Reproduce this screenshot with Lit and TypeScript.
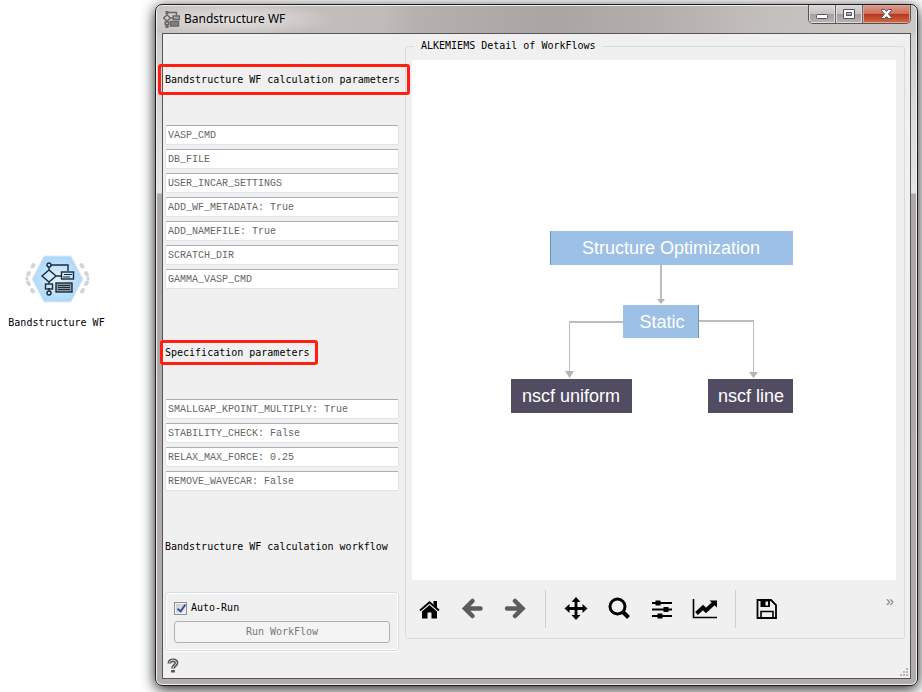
import { LitElement, html, svg, css } from "lit";
import { customElement, property, state } from "lit/decorators.js";

const flowGlyph = svg`
  <circle cx="8" cy="3" r="2"/>
  <path d="M10 3H27V9M8 5V8M1 14L8 8L15 14L8 20ZM15 14H20M8 20V22M8 26V29"/>
  <rect x="20.500" y="10" width="12" height="7"/>
  <path d="M23 12.500H31M22 15H29" stroke-width="1"/>
  <rect x="4.500" y="22" width="7" height="5"/>
  <circle cx="8" cy="31" r="2"/>
  <rect x="15" y="21" width="16" height="9" fill="#8d9aa5"/>
  <path d="M17 23.500H29M17 25.500H29M17 27.500H29" stroke-width="1"/>`;

@customElement("desktop-node")
export class DesktopNode extends LitElement {
  @property() label = "";

  static styles = css`
    :host {
      display: flex;
      flex-direction: column;
      align-items: center;
      gap: 9px;
      font: 10px/16px "DejaVu Sans Mono", "Liberation Mono", monospace;
      color: #000;
    }
    .hexagon {
      display: block;
      width: 68px;
      height: 54px;
    }
    .label {
      white-space: nowrap;
    }
  `;

  render() {
    return html`
      <svg class="hexagon" viewBox="0 0 68 54" aria-hidden="true">
        <defs>
          <radialGradient id="fill">
            <stop offset="0" stop-color="#e0f1ff" />
            <stop offset="1" stop-color="#acd8fb" />
          </radialGradient>
        </defs>
        <g stroke="#cfd6da" stroke-width="4" stroke-linecap="round">
          <path d="M9.500 14.500L10.500 13M5 22.500L6 21M5 30.500L6 32M9 38L10 39.500" />
          <path d="M59.500 14.500L58.500 13M64 22.500L63 21M64 30.500L63 32M60 38L59 39.500" />
          <path d="M4 26V27M65 26V27" stroke-width="3" />
        </g>
        <path d="M9 27L21 4H48L60 27L48 50H21Z" fill="url(#fill)" stroke="#e3eaee" stroke-width="1" />
        <g transform="translate(18 10)" fill="none" stroke="#1d2b36" stroke-width="1.400">${flowGlyph}</g>
      </svg>
      <span class="label">${this.label}</span>
    `;
  }
}

@customElement("workflow-diagram")
export class WorkflowDiagram extends LitElement {
  static styles = css`
    :host {
      display: block;
    }
    .diagram {
      display: block;
      width: 282px;
      height: 182px;
    }
    .step {
      fill: #9dc0e6;
    }
    .leaf {
      fill: #524c63;
    }
    .edge {
      fill: none;
      stroke: #bcbcbc;
      stroke-width: 2;
    }
    .thin {
      stroke-width: 1;
    }
    .tip {
      fill: #b4b4b4;
    }
    .shade {
      fill: #6f93b3;
    }
    .name {
      font: 18px "Liberation Sans", Arial, sans-serif;
      fill: #fff;
      text-anchor: middle;
    }
  `;

  render() {
    return html`
      <svg class="diagram" viewBox="0 0 282 182" role="img" aria-label="Workflow steps">
        <path class="edge" d="M150 34V70M112 91H58M188 90H243" />
        <path class="edge thin" d="M58.500 91V142M242.500 90V142" />
        <path class="tip" d="M146 68H154L150 73ZM54 140H63L58.500 147ZM238 141H247L242.500 147Z" />
        <rect class="step" x="39" y="0" width="243" height="34" />
        <rect class="shade" x="39" y="0" width="1" height="34" />
        <rect class="step" x="112" y="74" width="76" height="33" />
        <rect class="shade" x="187" y="74" width="1" height="33" />
        <rect class="leaf" x="0" y="148" width="121" height="34" />
        <rect class="leaf" x="197" y="148" width="85" height="34" />
        <text class="name" x="160" y="23">Structure Optimization</text>
        <text class="name" x="151" y="97">Static</text>
        <text class="name" x="60" y="171">nscf uniform</text>
        <text class="name" x="240" y="171">nscf line</text>
      </svg>
    `;
  }
}

interface Tool {
  name: string;
  muted?: boolean;
  icon: unknown;
}

const toolGroups: Tool[][] = [
  [
    {
      name: "Home",
      icon: svg`<path d="M12.500 8L20 14.500V21.500H14.500V15.500H10.500V21.500H5V14.500Z"/>
        <path d="M16.500 4H20V11L16.500 8Z"/>
        <path d="M3 13.500L12.500 5.200L22 13.500" fill="none" stroke="#000" stroke-width="1.900"/>`,
    },
    {
      name: "Back",
      muted: true,
      icon: svg`<path d="M12.500 4L5 11.500L12.500 19M6 11.500H20.500" fill="none" stroke="#5c5c5c" stroke-width="4.500"/>`,
    },
    {
      name: "Forward",
      muted: true,
      icon: svg`<path d="M12 4L19.500 11.500L12 19M18.500 11.500H4" fill="none" stroke="#5c5c5c" stroke-width="4.500"/>`,
    },
  ],
  [
    {
      name: "Pan",
      icon: svg`<path d="M12 2V21M3 11.500H21" stroke="#000" stroke-width="2.800"/>
        <path d="M12 0L16.500 5H7.500ZM12 23L16.500 18H7.500ZM0.500 11.500L5.500 7V16ZM23.500 11.500L18.500 7V16Z"/>`,
    },
    {
      name: "Zoom",
      icon: svg`<g fill="none" stroke="#000" stroke-width="3"><circle cx="10.500" cy="9.500" r="7.500"/>
        <path d="M16 15L21.500 20.500" stroke-width="4"/></g>`,
    },
    {
      name: "Configure subplots",
      icon: svg`<path d="M2 6H22M2 12.500H22M2 19H22" stroke="#000" stroke-width="2"/>
        <path d="M5.500 3.500H10.500V8.500H5.500ZM13.500 10H18.500V15H13.500ZM7.500 16.500H12.500V21.500H7.500Z"/>`,
    },
    {
      name: "Edit axes",
      icon: svg`<path d="M0.500 2V20.500H24" fill="none" stroke="#000" stroke-width="1.600"/>
        <path d="M3.500 16.500L10 10.500L13 13.500L20.500 6.500" fill="none" stroke="#000" stroke-width="4"/>
        <path d="M16.500 3.500H24V10.500Z"/>`,
    },
  ],
  [
    {
      name: "Save",
      icon: svg`<path d="M3.500 3H17L22 8V21H3.500Z" fill="none" stroke="#000" stroke-width="1.800"/>
        <path d="M6.500 3H16V10H6.500ZM11.500 4.500V8.500H14V4.500Z" fill-rule="evenodd"/>
        <path d="M7 21V14.500H19V21" fill="none" stroke="#000" stroke-width="1.600"/>`,
    },
  ],
];

@customElement("plot-toolbar")
export class PlotToolbar extends LitElement {
  static styles = css`
    :host {
      display: flex;
      align-items: center;
      height: 58px;
    }
    .tool {
      display: flex;
      justify-content: center;
      align-items: center;
      flex: none;
      width: 43px;
      height: 40px;
      padding: 0;
      border: 0;
      background: none;
    }
    .glyph {
      width: 24px;
      height: 24px;
      overflow: visible;
    }
    .muted {
      stroke-linecap: round;
    }
    .divider {
      flex: none;
      width: 1px;
      height: 38px;
      margin: 0 8px 0 9px;
      background: #cfcfcf;
    }
    .more {
      align-self: flex-start;
      margin: 13px 0 0 auto;
      padding: 0 2px;
      border: 0;
      background: none;
      color: #808080;
      font: 15px/16px "Liberation Sans", sans-serif;
    }
  `;

  render() {
    return html`
      ${toolGroups.map(
        (group, i) => html`
          ${i ? html`<span class="divider"></span>` : ""}
          ${group.map(
            (t) => html`<button class="tool" aria-label=${t.name} ?disabled=${t.muted}>
              <svg class="glyph ${t.muted ? "muted" : ""}" viewBox="0 0 24 24">${t.icon}</svg>
            </button>`
          )}
        `
      )}
      <button class="more" aria-label="More tools">»</button>
    `;
  }
}

const calculationFields = [
  "VASP_CMD",
  "DB_FILE",
  "USER_INCAR_SETTINGS",
  "ADD_WF_METADATA: True",
  "ADD_NAMEFILE: True",
  "SCRATCH_DIR",
  "GAMMA_VASP_CMD",
];

const specificationFields = [
  "SMALLGAP_KPOINT_MULTIPLY: True",
  "STABILITY_CHECK: False",
  "RELAX_MAX_FORCE: 0.25",
  "REMOVE_WAVECAR: False",
];

@customElement("workflow-window")
export class WorkflowWindow extends LitElement {
  @state() private autoRun = true;

  static styles = css`
    :host {
      display: flex;
      flex-direction: column;
      box-sizing: border-box;
      padding: 0 6px 6px;
      border: 1px solid #1c1c1c;
      border-radius: 7px;
      color: #000;
      font: 10px/16px "DejaVu Sans Mono", "Liberation Mono", monospace;
      background:
        radial-gradient(ellipse 100px 16px at 80px 14px, #e4e2e1, transparent) no-repeat 0 0 / 100% 28px,
        linear-gradient(95deg, #c9c5c3 0%, #c0bab8 30%, #b6b0ae 34%, #aaa4a2 52%, #b3adab 65%, #c3bfbd 80%, #cbc8c6 100%)
          no-repeat 0 0 / 100% 28px,
        linear-gradient(#cdc9c7, #e6e4e3 188px, #aea8a8 189px, #b2acac);
      box-shadow:
        inset 0 0 0 1px #f0eeee,
        0 3px 14px rgba(0, 0, 0, 0.9);
    }
    .titlebar {
      display: flex;
      align-items: center;
      height: 28px;
    }
    .app-icon {
      width: 17px;
      height: 17px;
      margin-left: 1px;
    }
    .title {
      margin: 0 auto 0 4px;
      font: 12px/18px "Noto Sans", "Open Sans", sans-serif;
    }
    .controls {
      display: flex;
      align-self: flex-start;
      border: 1px solid #55525a;
      border-top: 0;
      border-radius: 0 0 5px 5px;
      overflow: hidden;
    }
    .control {
      display: flex;
      justify-content: center;
      align-items: center;
      width: 27px;
      height: 18px;
      padding: 0;
      border: 0;
      border-right: 1px solid #66636a;
      background: linear-gradient(#dbd8d7, #c6c2c1 48%, #a39e9e 50%, #b9b5b4);
      box-shadow: inset 0 0 0 1px #dedbdb;
    }
    .close {
      width: 47px;
      border-right: 0;
      background: linear-gradient(#dd9c8c, #cf6e59 48%, #b5351c 50%, #d46a45);
      box-shadow: inset 0 0 0 1px #e0a494;
    }
    .client {
      display: flex;
      flex: 1;
      border: 1px solid #57545a;
      background: #f0f0f0;
    }
    .parameters {
      flex: none;
      display: flex;
      flex-direction: column;
      align-items: stretch;
      width: 234px;
      padding: 0 6px 0 2px;
    }
    .heading {
      position: relative;
      z-index: 1;
      align-self: flex-start;
      margin: 0 0 37px;
      font: inherit;
      white-space: nowrap;
    }
    .heading-first {
      margin-top: 38px;
    }
    .heading-second {
      margin-top: 56px;
      margin-bottom: 38px;
    }
    .heading-third {
      margin-top: 48px;
    }
    .marked::after {
      content: "";
      position: absolute;
      inset: -8px -10px -7px -7px;
      border: 3px solid #ff1f12;
      border-radius: 3px;
    }
    .compact::after {
      inset: -5px -8px -4px -5px;
    }
    .fields {
      display: flex;
      flex-direction: column;
      gap: 4px;
    }
    .field {
      box-sizing: border-box;
      width: 100%;
      height: 20px;
      padding: 0 2px;
      border: 1px solid #dce3ec;
      border-top-color: #abadb3;
      border-radius: 2px;
      background: #fff;
      font: 10px/16px "Liberation Mono", "Courier New", monospace;
      outline: 0;
    }
    .field::placeholder {
      color: #666;
      opacity: 1;
    }
    .run-group {
      display: flex;
      flex-direction: column;
      gap: 5px;
      padding: 7px 8px;
      border: 1px solid #d3dde6;
      border-radius: 3px;
      box-shadow: inset 0 0 0 1px #fff, 0 1px #fff;
    }
    .auto-run {
      display: flex;
      align-items: center;
      gap: 4px;
    }
    .tick {
      appearance: none;
      box-sizing: border-box;
      width: 13px;
      height: 13px;
      margin: 0;
      border: 1px solid #8e8f8f;
      background: linear-gradient(135deg, #c3c8cf, #f4f4f4);
      box-shadow: inset 0 0 0 1px #f4f4f4;
    }
    .tick:checked::after {
      content: "";
      display: block;
      width: 3px;
      height: 7px;
      margin: 0 0 0 4px;
      border: solid #3a4f9d;
      border-width: 0 2px 2px 0;
      transform: rotate(35deg);
    }
    .run {
      height: 22px;
      padding: 0;
      border: 1px solid #adb2b5;
      border-radius: 3px;
      background: #f4f4f4;
      color: #787878;
      font: inherit;
    }
    .help {
      align-self: flex-start;
      display: flex;
      margin: 7px 0 4px;
      padding: 0 2px;
      border: 0;
      background: none;
    }
    .detail {
      flex: 1;
      display: flex;
      flex-direction: column;
      min-width: 0;
      margin: 4px 5px 39px 0;
      padding: 6px 8px 0 6px;
      border: 1px solid #d3dde6;
      border-radius: 3px;
    }
    .detail-title {
      margin-left: 2px;
      padding: 0 7px;
    }
    .canvas {
      flex: 1;
      display: flex;
      justify-content: center;
      align-items: center;
      padding: 4px 4px 0 0;
      background: #fff;
    }
    .tools {
      margin-left: -5px;
    }
    .side {
      position: relative;
      display: flex;
      flex: 1;
      min-width: 0;
    }
    .grip {
      position: absolute;
      right: 1px;
      bottom: 1px;
      width: 10px;
      height: 10px;
      fill: #b4b4b4;
    }
  `;

  private fields(names: string[]) {
    return html`<div class="fields">
      ${names.map((n) => html`<input class="field" type="text" placeholder=${n} aria-label=${n} />`)}
    </div>`;
  }

  render() {
    return html`
      <header class="titlebar">
        <svg class="app-icon" viewBox="0 0 34 34" fill="none" stroke="#666" stroke-width="3" aria-hidden="true">
          ${flowGlyph}
        </svg>
        <h1 class="title">Bandstructure WF</h1>
        <div class="controls">
          <button class="control" aria-label="Minimize">
            <svg width="14" height="14" viewBox="0 0 14 14">
              <rect x="1.500" y="7.500" width="11" height="4" rx="1" fill="#fff" stroke="#54525f" />
            </svg>
          </button>
          <button class="control" aria-label="Maximize">
            <svg width="14" height="12" viewBox="0 0 14 12">
              <path d="M1.500 1.500H12.500V10.500H1.500ZM4.500 4.500V7.500H9.500V4.500Z" fill="#fff" fill-rule="evenodd" stroke="#54525f" />
            </svg>
          </button>
          <button class="control close" aria-label="Close">
            <svg width="13" height="12" viewBox="0 0 13 12">
              <path
                d="M1.500 1.500H4.500L6.500 3.500L8.500 1.500H11.500V2.500L8.500 6L11.500 9.500V10.500H8.500L6.500 8.500L4.500 10.500H1.500V9.500L4.500 6L1.500 2.500Z"
                fill="#fff"
                stroke="#54525f"
              />
            </svg>
          </button>
        </div>
      </header>
      <div class="client">
        <section class="parameters">
          <h2 class="heading heading-first marked">Bandstructure WF calculation parameters</h2>
          ${this.fields(calculationFields)}
          <h2 class="heading heading-second marked compact">Specification parameters</h2>
          ${this.fields(specificationFields)}
          <h2 class="heading heading-third">Bandstructure WF calculation workflow</h2>
          <div class="run-group">
            <label class="auto-run">
              <input
                class="tick"
                type="checkbox"
                .checked=${this.autoRun}
                @change=${(e: Event) => (this.autoRun = (e.target as HTMLInputElement).checked)}
              />
              Auto-Run
            </label>
            <button class="run" ?disabled=${this.autoRun}>Run WorkFlow</button>
          </div>
          <button class="help" aria-label="Help">
            <svg width="12" height="16" viewBox="0 0 12 16" fill="none">
              <path d="M2.500 5.500V4.500C2.500 1.500 9.500 1.500 9.500 4.800C9.500 7.500 6 7.500 6 10.500M6 12V14.500" stroke="#555" stroke-width="3.800" />
              <path d="M2.500 5V4.500C2.500 1.500 9.500 1.500 9.500 4.800C9.500 7.500 6 7.500 6 10" stroke="#e4e4e4" stroke-width="1" />
            </svg>
          </button>
        </section>
        <div class="side">
          <fieldset class="detail">
            <legend class="detail-title">ALKEMIEMS Detail of WorkFlows</legend>
            <div class="canvas"><workflow-diagram></workflow-diagram></div>
            <plot-toolbar class="tools"></plot-toolbar>
          </fieldset>
          <svg class="grip" viewBox="0 0 10 10" aria-hidden="true">
            <path d="M7 1H9V3H7ZM4 4H6V6H4ZM7 4H9V6H7ZM1 7H3V9H1ZM4 7H6V9H4ZM7 7H9V9H7Z" />
          </svg>
        </div>
      </div>
    `;
  }
}

@customElement("app-root")
export class AppRoot extends LitElement {
  static styles = css`
    :host {
      display: flex;
      box-sizing: border-box;
      min-height: 100vh;
      padding: 4px 4px 6px 0;
      overflow: hidden;
      background: #fff;
    }
    .desktop {
      flex: none;
      width: 113px;
      padding: 248px 42px 0 0;
    }
    .window {
      flex: 1;
      min-width: 0;
    }
  `;

  render() {
    return html`
      <div class="desktop"><desktop-node label="Bandstructure WF"></desktop-node></div>
      <workflow-window class="window"></workflow-window>
    `;
  }
}
